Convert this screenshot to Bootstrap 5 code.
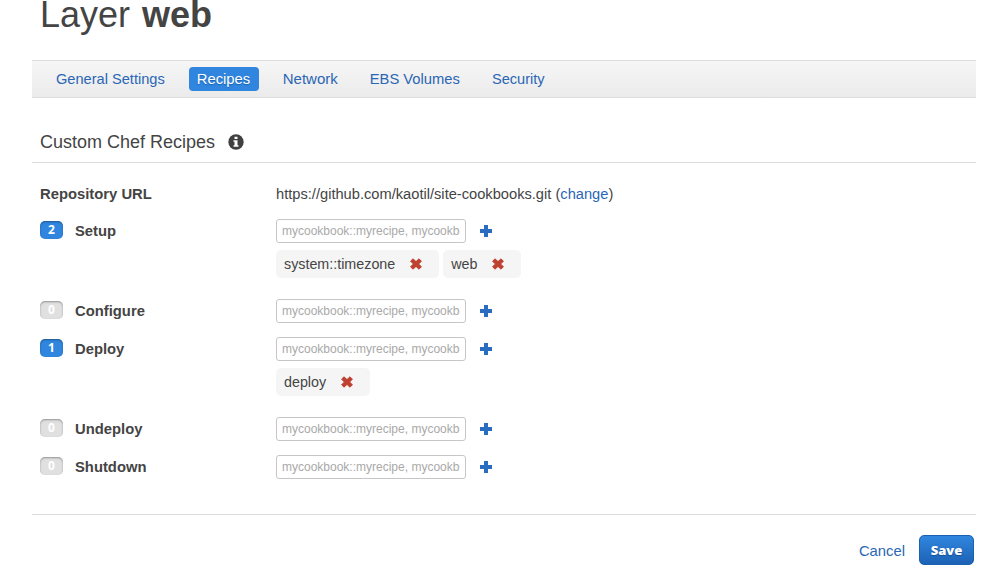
<!DOCTYPE html>
<html lang="en">
<head>
<meta charset="utf-8">
<meta name="viewport" content="width=device-width, initial-scale=1">
<title>Layer web</title>
<link href="https://cdn.jsdelivr.net/npm/bootstrap@5.3.0/dist/css/bootstrap.min.css" rel="stylesheet">
<style>
body{font-family:"Liberation Sans",Arial,sans-serif;font-size:14.6px;line-height:20px;color:#444;overflow:hidden}
a{color:#2b66b5;text-decoration:none}
.page-body{width:944px;margin-left:32px}
.page-title{font-size:36px;line-height:30px;margin:0;padding:0 8px;height:60px;word-spacing:2px}
.layer-tabs{height:38px;border:solid #ddd;border-width:1px 0;background:linear-gradient(#f6f6f6,#ebebeb);padding-left:16px}
.layer-tabs .nav-link{color:#2b66b5;padding:0 8px;height:24px;line-height:24px;border-radius:4px;white-space:nowrap}
.layer-tabs .nav-link.active{background:#3086de;color:#fff;width:70px;font-size:14.8px;text-shadow:0 1px 1px #1a5fae}
.layer-tabs .wide-tab{font-size:15px;line-height:23px}
.layer-tabs .volumes-tab{font-size:14.75px}
.section-title{font-size:18px;line-height:24px;height:65px;padding:32px 8px 0;margin:0;border-bottom:1px solid #ddd}
.info-icon{margin-left:13px}
.repo-row{padding:21px 8px 0;height:56px}
.repo-url{font-size:14.67px}
.key-col{width:236px}
.repo-row .key-col,.stage-name{font-size:14.8px}
.stage-row{padding:0 8px;height:38px}
.stage-row.filled{height:80px}
.stage-count{width:23px;height:18px;margin-top:2px;border-radius:5px;font:bold 12px/17px "Open Sans",sans-serif;background:#3086de;color:#fff;text-align:center;box-shadow:inset 0 1px 2px rgba(0,0,0,.35)}
.stage-count.empty{background:#e0e0e0}
.stage-name{margin-left:12px;line-height:24px}
.recipe-input{width:190px;height:24px;min-height:0;border:1px solid #c6c6c6;border-radius:3px;padding:0 5px;font-size:12px;line-height:22px;color:#444}
.recipe-input::placeholder{color:#a9a9a9;opacity:1}
.recipe-tag{height:28px;margin-top:7px;background:#f5f5f5;border-radius:5px;padding:0 17px 0 8px;font-size:14.3px;line-height:28px}
.recipe-tag svg{margin-left:15px}
.add-link{margin-left:14px}
.form-actions{border-top:1px solid #ddd;margin-top:21px;padding:20px 2px 0 0}
.cancel-link{margin:1px 14px 0 0;font-size:14.8px}
.save-btn{width:55px;height:30px;padding:0;border:1px solid #1a61b2;border-radius:5px;background:linear-gradient(#3086de,#1c62b5);color:#fff;font:800 13px/28px "Open Sans",sans-serif;text-shadow:0 1px 1px #174f91}
</style>
<script src="https://cdn.jsdelivr.net/npm/bootstrap@5.3.0/dist/js/bootstrap.bundle.min.js"></script>
</head>
<body class="bg-white">
<svg class="d-none">
<symbol id="plus" viewBox="0 0 12 12"><path fill="#2a6dc0" d="M4 0h4v4h4v4H8v4H4V8H0V4h4z"/></symbol>
<symbol id="cross" viewBox="0 0 12 12"><path fill="#be4030" stroke="#be4030" stroke-linejoin="round" d="M3 .8 6 3.6 9 .8l2.4 2.4L8.6 6l2.8 2.8L9 11.2 6 8.4 3 11.2.6 8.8 3.4 6 .6 3.2z"/></symbol>
</svg>
<main class="page-body">
<h1 class="page-title fw-normal">Layer <b>web</b></h1>
<nav class="nav layer-tabs d-flex flex-nowrap align-items-center gap-3">
<a class="nav-link" href="#">General Settings</a>
<a class="nav-link active" href="#">Recipes</a>
<a class="nav-link wide-tab" href="#">Network</a>
<a class="nav-link volumes-tab" href="#">EBS Volumes</a>
<a class="nav-link" href="#">Security</a>
</nav>
<h2 class="section-title fw-normal d-flex align-items-start">Custom Chef Recipes
<svg class="info-icon mt-1" width="16" height="16" viewBox="0 0 16 16"><circle cx="8" cy="8" r="7.7" fill="#404040"/><path fill="#fff" d="M6.5 2.7h3v2.2h-3zM5.5 6.2h4v5h1v1.6h-5v-1.6h1V7.8h-1z"/></svg></h2>
<div class="repo-row d-flex"><b class="key-col">Repository URL</b><span class="repo-url">https://github.com/kaotil/site-cookbooks.git (<a href="#">change</a>)</span></div>
<div class="stage-row filled d-flex">
<div class="key-col d-flex align-items-start"><span class="stage-count">2</span><b class="stage-name ps-px">Setup</b></div>
<div><div class="d-flex align-items-center"><input class="form-control recipe-input" placeholder="mycookbook::myrecipe, mycookbook::myrecipe2"><a class="add-link d-flex" href="#"><svg width="12" height="12"><use href="#plus"/></svg></a></div>
<div class="d-flex"><span class="recipe-tag d-flex align-items-center me-1">system::timezone<svg width="12" height="12"><use href="#cross"/></svg></span><span class="recipe-tag d-flex align-items-center">web<svg width="12" height="12"><use href="#cross"/></svg></span></div></div>
</div>
<div class="stage-row d-flex">
<div class="key-col d-flex align-items-start"><span class="stage-count empty">0</span><b class="stage-name">Configure</b></div>
<div><div class="d-flex align-items-center"><input class="form-control recipe-input" placeholder="mycookbook::myrecipe, mycookbook::myrecipe2"><a class="add-link d-flex" href="#"><svg width="12" height="12"><use href="#plus"/></svg></a></div></div>
</div>
<div class="stage-row filled d-flex">
<div class="key-col d-flex align-items-start"><span class="stage-count">1</span><b class="stage-name">Deploy</b></div>
<div><div class="d-flex align-items-center"><input class="form-control recipe-input" placeholder="mycookbook::myrecipe, mycookbook::myrecipe2"><a class="add-link d-flex" href="#"><svg width="12" height="12"><use href="#plus"/></svg></a></div>
<div class="d-flex"><span class="recipe-tag d-flex align-items-center">deploy<svg width="12" height="12"><use href="#cross"/></svg></span></div></div>
</div>
<div class="stage-row d-flex">
<div class="key-col d-flex align-items-start"><span class="stage-count empty">0</span><b class="stage-name">Undeploy</b></div>
<div><div class="d-flex align-items-center"><input class="form-control recipe-input" placeholder="mycookbook::myrecipe, mycookbook::myrecipe2"><a class="add-link d-flex" href="#"><svg width="12" height="12"><use href="#plus"/></svg></a></div></div>
</div>
<div class="stage-row d-flex">
<div class="key-col d-flex align-items-start"><span class="stage-count empty">0</span><b class="stage-name">Shutdown</b></div>
<div><div class="d-flex align-items-center"><input class="form-control recipe-input" placeholder="mycookbook::myrecipe, mycookbook::myrecipe2"><a class="add-link d-flex" href="#"><svg width="12" height="12"><use href="#plus"/></svg></a></div></div>
</div>
<div class="form-actions d-flex justify-content-end align-items-center"><a class="cancel-link" href="#">Cancel</a><button class="btn save-btn" type="button">Save</button></div>
</main>
</body>
</html>
